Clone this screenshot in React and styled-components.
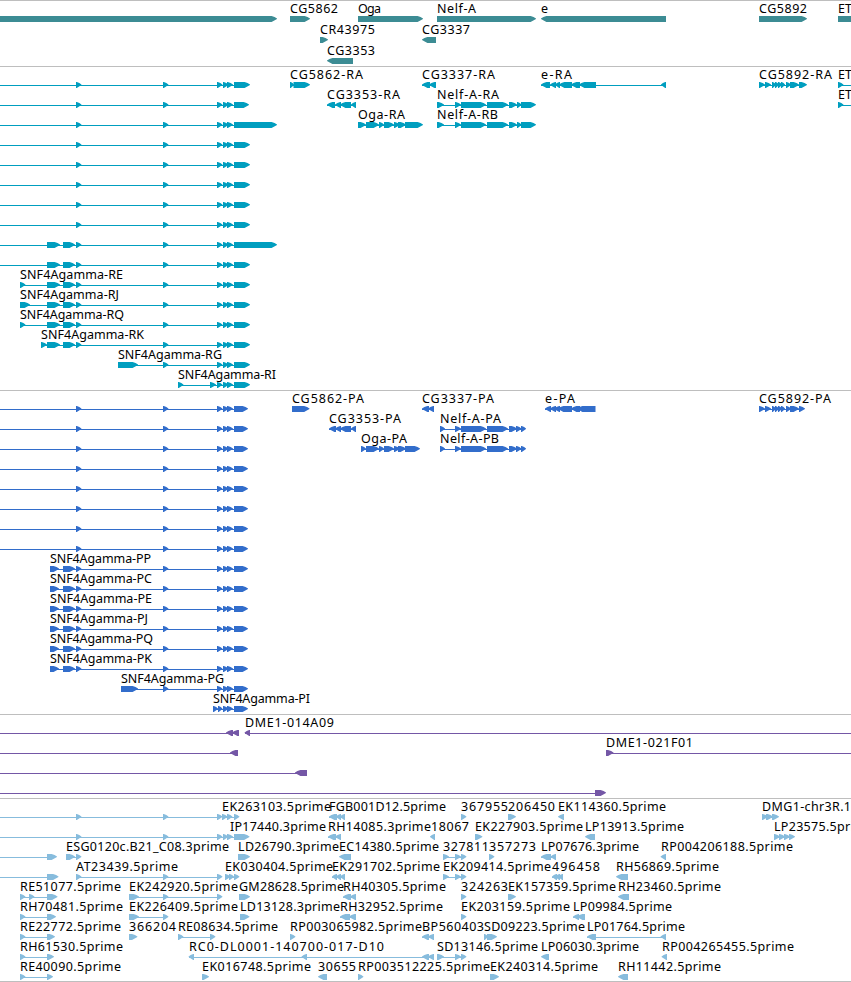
import React from "react";
import styled, { createGlobalStyle } from "styled-components";

const GlobalStyle = createGlobalStyle`
  body {
    margin: 0;
    background: #fff;
  }
`;

const palette = {
  gene: "#3c8c94",
  transcript: "#009ebf",
  protein: "#326dcb",
  clone: "#7457a6",
  est: "#87bcdd",
};

const Browser = styled.main`
  display: flex;
  flex-direction: column;
  width: 851px;
  height: 982px;
  overflow: hidden;
  border-bottom: 1px solid #bebebe;
  box-sizing: border-box;
`;

const Track = styled.section`
  display: flex;
  flex-direction: column;
  padding: 2px 0 ${(props) => (props.$tight ? 0 : 1)}px;
  border-top: 1px solid #bebebe;
  color: ${(props) => props.$color};
`;

const Lane = styled.svg`
  display: block;
  flex: none;
  width: 851px;
  height: ${(props) => props.$height}px;
  overflow: visible;
`;

const Label = styled.text`
  fill: #000;
  font-family: "Noto Sans", "DejaVu Sans", sans-serif;
  font-size: 12.5px;
`;

const Intron = styled.rect`
  fill: currentColor;
  shape-rendering: crispEdges;
`;

const Exon = styled.polygon`
  fill: currentColor;
`;

// feature: exons run left to right, from/to stretch the intron line off the view
const fwd = (label, width, exons, extra) => ({ label, width, exons, ...extra });
const rev = (label, width, exons, extra) => ({
  label,
  width,
  exons,
  reverse: true,
  ...extra,
});

const off = { from: 0 };
const tail = (end) => [[217, 222.4], [223, 228.4], [227, 233], [234, end]];
const shared = (end) => [[76, 81.4], [163, 168.4], ...tail(end)];
const upstream = (end) => [[47, 60], [63, 75], ...shared(end)];

const genes = [
  [
    fwd("", 0, [[0, 277]]),
    fwd("CG5862", 48, [[290, 310]]),
    fwd("Oga", 23, [[358, 423]]),
    fwd("Nelf-A", 39, [[437, 536]]),
    rev("e", 7, [[541, 666]]),
    fwd("CG5892", 48, [[759, 807]]),
    fwd("ET", 14, [[838, 870]]),
  ],
  [fwd("CR43975", 55, [[320, 328]]), rev("CG3337", 48, [[422, 436]])],
  [rev("CG3353", 48, [[327, 353]])],
];

const nelfRna = [[437, 444], [455, 461], [461, 486], [487, 508], [509, 517], [517, 521.5], [521, 536]];
const nelfProtein = [[440, 445], [455, 461], [461, 486], [487, 508], [509, 517], [516, 521.5], [521, 526]];
const cg5892 = (end) => [
  [759, 765], [765, 771], [772, 776], [775, 779], [778, 782],
  [781, 785], [786, 791], [790, 799], [799, end],
];

const transcripts = [
  [
    fwd("", 0, shared(250), off),
    fwd("CG5862-RA", 73, [[290, 294], [293.5, 310]]),
    rev("CG3337-RA", 73, [[422, 430], [429, 436]]),
    rev("e-RA", 31, [[541, 550], [550, 556], [555, 560], [559, 572], [571, 580], [579, 596], [661, 666]]),
    fwd("CG5892-RA", 73, cg5892(807)),
    fwd("ET", 14, [[838, 843.4]], { to: 851 }),
  ],
  [
    fwd("", 0, shared(249), off),
    rev("CG3353-RA", 73, [[327, 335], [335, 341], [340, 351], [351, 356]]),
    fwd("Nelf-A-RA", 62, nelfRna),
    fwd("ET", 14, [[838, 843.4]], { to: 851 }),
  ],
  [
    fwd("", 0, shared(277), off),
    fwd("Oga-RA", 47, [[358, 366], [366, 379], [379, 384], [384, 394], [394, 400], [398, 406], [405, 423]]),
    fwd("Nelf-A-RB", 61, nelfRna),
  ],
  [fwd("", 0, shared(250), off)],
  [fwd("", 0, shared(250), off)],
  [fwd("", 0, shared(250), off)],
  [fwd("", 0, shared(250), off)],
  [fwd("", 0, shared(250), off)],
  [fwd("", 0, upstream(277), off)],
  [fwd("", 0, upstream(250), off)],
  [fwd("SNF4Agamma-RE", 103, [[20, 25.4], ...upstream(250)])],
  [fwd("SNF4Agamma-RJ", 99, [[20, 30], ...upstream(250)])],
  [fwd("SNF4Agamma-RQ", 104, [[20, 25.4], ...upstream(250)])],
  [fwd("SNF4Agamma-RK", 103, [[41, 47], ...upstream(250)])],
  [fwd("SNF4Agamma-RG", 104, [[118, 138], [163, 168.4], ...tail(250)])],
  [fwd("SNF4Agamma-RI", 98, [[178, 183.4], [210, 216], ...tail(250)])],
];

const coding = [[50, 59], [63, 75], ...shared(248)];

const proteins = [
  [
    fwd("", 0, shared(248), off),
    fwd("CG5862-PA", 72, [[292, 309.5]]),
    rev("CG3337-PA", 72, [[422, 429], [428, 434]]),
    rev("e-PA", 30, [[545, 551], [550, 556], [554, 560], [558, 572], [571, 580], [577, 595.5]]),
    fwd("CG5892-PA", 72, cg5892(805)),
  ],
  [
    fwd("", 0, shared(248), off),
    rev("CG3353-PA", 72, [[329, 336], [335, 341], [340, 351], [351, 356]]),
    fwd("Nelf-A-PA", 61, nelfProtein),
  ],
  [
    fwd("", 0, shared(248), off),
    fwd("Oga-PA", 46, [[361, 366], [366, 379], [379, 384], [384, 394], [394, 400], [398, 406], [405, 420]]),
    fwd("Nelf-A-PB", 59, nelfProtein),
  ],
  [fwd("", 0, shared(248), off)],
  [fwd("", 0, shared(248), off)],
  [fwd("", 0, shared(248), off)],
  [fwd("", 0, shared(248), off)],
  [fwd("", 0, shared(248), off)],
  [fwd("SNF4Agamma-PP", 101, coding)],
  [fwd("SNF4Agamma-PC", 102, coding)],
  [fwd("SNF4Agamma-PE", 102, coding)],
  [fwd("SNF4Agamma-PJ", 98, coding)],
  [fwd("SNF4Agamma-PQ", 103, coding)],
  [fwd("SNF4Agamma-PK", 102, coding)],
  [fwd("SNF4Agamma-PG", 103, [[121, 138], [163, 168.4], ...tail(248)])],
  [fwd("SNF4Agamma-PI", 97, [[213, 218], [218, 222.4], ...tail(248).slice(1)])],
];

const clones = [
  [
    rev("", 0, [[226, 233], [232, 239]], off),
    rev("DME1-014A09", 89, [[244.6, 250]], { to: 851 }),
  ],
  [
    rev("", 0, [[230, 238]], off),
    fwd("DME1-021F01", 87, [[606, 613.5]], { to: 851 }),
  ],
  [rev("", 0, [[295, 307]], off)],
  [fwd("", 0, [[595, 606]], off)],
];

const ests = [
  [
    fwd("", 0, [[76, 81.4], [163, 168.4], [217, 222.4]], off),
    fwd("EK263103.5prime", 109, [[222, 227.4], [227, 232.4], [234, 239.4]]),
    rev("FGB001D12.5prime", 117, [[329, 337], [336, 341], [340, 345]]),
    fwd("367955", 47, [[461, 466.4]]),
    fwd("206450", 47, [[508, 516]]),
    rev("EK114360.5prime", 108, [[558, 564]]),
    fwd("DMG1-chr3R.1", 89, [[762, 768], [766, 773], [772, 779]]),
  ],
  [
    fwd("", 0, [[76, 81.4], [163, 168.4], [217, 222.4], [223, 228]], off),
    fwd("IP17440.3prime", 96, [[227, 233], [234, 249.5]], { at: 230 }),
    rev("RH14085.3prime", 103, [[328, 336], [335, 341]]),
    rev("18067", 38, [[430, 435]], { at: 431 }),
    fwd("EK227903.5prime", 108, [[475, 482.4]]),
    rev("LP13913.5prime", 99, [[585, 595]]),
    fwd("LP23575.5prime", 99, [[774, 780], [779, 785], [784, 790], [789, 795]]),
  ],
  [
    fwd("", 0, [[47, 57]], off),
    fwd("ESG0120c.B21_C08.3prime", 163, [[66, 75], [76, 81.4]]),
    fwd("LD26790.3prime", 101, [[238, 250]]),
    rev("EC14380.5prime", 100, [[339, 351]]),
    fwd("327811", 46, [[443, 449], [455, 461], [461, 466.4]]),
    fwd("357273", 47, [[489, 494.4]]),
    rev("LP07676.3prime", 98, [[541, 551], [550.5, 556]]),
    rev("RP004206188.5prime", 132, [[660.6, 666]]),
  ],
  [
    fwd("", 0, [[47, 58.5]], off),
    fwd("AT23439.5prime", 102, [[76, 81.4], [163, 168.4], [217, 222.4]]),
    fwd("EK030404.5prime", 108, [[225, 230.4], [229, 234], [234, 239.4]]),
    rev("EK291702.5prime", 108, [[332, 337], [336, 341], [340, 345]]),
    fwd("EK209414.5prime", 108, [[443, 449], [455, 461], [461, 466.4]]),
    rev("496458", 48, [[552, 557], [555, 560], [558, 563]]),
    rev("RH56869.5prime", 103, [[616, 628]]),
  ],
  [
    fwd("RE51077.5prime", 101, [[20, 25.4], [29, 34.4], [47, 57.5]]),
    fwd("EK242920.5prime", 109, [[129, 139], [163, 168.4], [217, 222.4]]),
    fwd("GM28628.5prime", 105, [[239, 250]]),
    rev("RH40305.5prime", 103, [[343, 351], [350, 356]]),
    fwd("324263", 47, [[461, 466.4]]),
    fwd("EK157359.5prime", 108, [[508, 516]]),
    rev("RH23460.5prime", 103, [[618, 629]]),
  ],
  [
    fwd("RH70481.5prime", 103, [[20, 25.4], [47, 56]]),
    fwd("EK226409.5prime", 109, [[129, 139], [163, 168.4]]),
    fwd("LD13128.3prime", 100, [[240, 249.5]]),
    rev("RH32952.5prime", 103, [[340, 350], [349, 356]]),
    fwd("EK203159.5prime", 109, [[461, 466.4]]),
    rev("LP09984.5prime", 99, [[573, 579], [577, 585]]),
  ],
  [
    fwd("RE22772.5prime", 101, [[20, 25.4], [47, 55]]),
    fwd("366204", 47, [[129, 137.4]]),
    fwd("RE08634.5prime", 100, [[178, 183.4], [210, 215.4]]),
    fwd("RP003065982.5prime", 132, [[290, 295.4]]),
    rev("BP560403", 62, [[422, 429], [428, 434]]),
    fwd("SD09223.5prime", 101, [[484, 488], [487, 497]]),
    rev("LP01764.5prime", 98, [[587, 596], [660.6, 666]]),
  ],
  [
    fwd("RH61530.5prime", 103, [[20, 25.4], [47, 54]]),
    rev("RC0-DL0001-140700-017-D10", 195, [[188.6, 194], [301.6, 307], [422, 429], [428, 434]]),
    fwd("SD13146.5prime", 101, [[437, 444], [455, 461], [461, 466.4]]),
    rev("LP06030.3prime", 98, [[541, 549]]),
    rev("RP004265455.5prime", 132, [[661.6, 667]]),
  ],
  [
    fwd("RE40090.5prime", 101, [[20, 25.4], [47, 53]]),
    fwd("EK016748.5prime", 109, [[202, 209]]),
    rev("30655", 38, [[318, 327]]),
    fwd("RP003512225.5prime", 132, [[358, 363.4]]),
    fwd("EK240314.5prime", 108, [[490, 499]]),
    rev("RH11442.5prime", 103, [[618, 628]]),
  ],
];

const tracks = [
  { name: "gene", lanes: genes, pitch: 21, tight: true },
  { name: "transcript", lanes: transcripts, pitch: 20 },
  { name: "protein", lanes: proteins, pitch: 20 },
  { name: "clone", lanes: clones, pitch: 20 },
  { name: "est", lanes: ests, pitch: 20, tight: true },
];

// box with a slightly rounded-off head, tip sits just above the intron line
const arrow = ([start, end], reverse) => {
  const head = Math.min(5.4, end - start - 0.8);
  const base = reverse ? end : start;
  const tip = reverse ? start : end;
  const dir = reverse ? 1 : -1;
  return [
    [base, 13],
    [tip + dir * head, 13],
    [tip + dir * head * 0.45, 14.1],
    [tip, 15.4],
    [tip, 16],
    [tip + dir * head * 0.5, 17.4],
    [tip + dir * head, 19],
    [base, 19],
  ].join(" ");
};

function Feature({ label, width, exons, reverse, from, to, at }) {
  const start = from ?? exons[0][0];
  const end = to ?? exons[exons.length - 1][1];

  return (
    <g>
      {(exons.length > 1 || from !== undefined || to !== undefined) && (
        <Intron x={start} y={16} width={end - start - (to ? 0 : 2)} height={1} />
      )}
      {exons.map((exon, i) => (
        <Exon key={i} points={arrow(exon, reverse)} />
      ))}
      {label && (
        <Label x={at ?? Math.round(start)} y={10} textLength={width}>
          {label}
        </Label>
      )}
    </g>
  );
}

export default function App() {
  return (
    <>
      <GlobalStyle />
      <Browser>
        {tracks.map((track) => (
          <Track key={track.name} $color={palette[track.name]} $tight={track.tight}>
            {track.lanes.map((features, i) => (
              <Lane key={i} $height={track.pitch}>
                {features.map((feature, j) => (
                  <Feature key={j} {...feature} />
                ))}
              </Lane>
            ))}
          </Track>
        ))}
      </Browser>
    </>
  );
}
